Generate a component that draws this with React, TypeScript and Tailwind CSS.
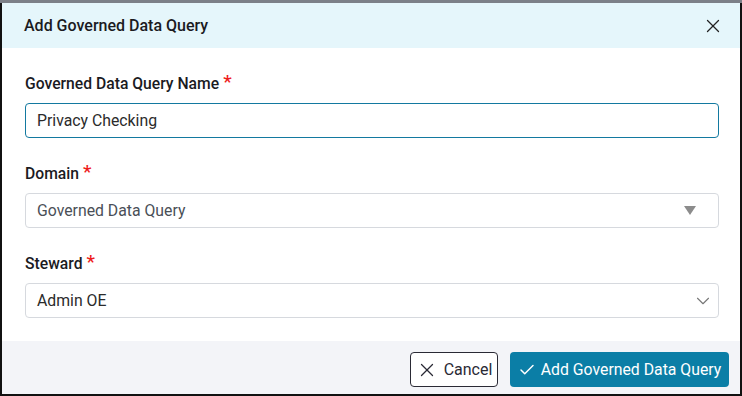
import React from 'react';
import { X, Check, ChevronDown } from 'lucide-react';

function Label({ children }: { children: React.ReactNode }) {
  return (
    <label className="flex items-start h-5 text-[15.7px] font-medium text-[#1b1b1f] leading-5">
      {children}
      <span className="ml-1 text-[#ee1c1c] text-[19px] leading-4">*</span>
    </label>
  );
}

export default function App() {
  return (
    <div className="w-[742px] h-[396px] bg-[#7c8088] pt-[3px] font-['Roboto',sans-serif] overflow-hidden">
      <div className="flex flex-col h-[393px] border-l-2 border-r-2 border-b-2 border-[#111] bg-white">
        <div className="flex items-center justify-between h-[45px] bg-[#e5f6fb] pl-[22px] pr-[16px]">
          <h2 className="text-[16px] font-medium text-[#1b1b1f]">Add Governed Data Query</h2>
          <button className="text-[#222]">
            <X size={22} strokeWidth={1.4} />
          </button>
        </div>

        <div className="flex-1 pt-[26px] pl-[23px] pr-[21px]">
          <Label>Governed Data Query Name</Label>
          <div className="mt-[9px] h-[35px] flex items-center pl-[11px] pr-3 border border-[#1379a0] rounded text-[15.8px] text-[#2b2b2b]">
            Privacy Checking
          </div>

          <div className="mt-[26px]">
            <Label>Domain</Label>
          </div>
          <div className="mt-[9px] h-[35px] flex items-center justify-between pl-[11px] pr-3 border border-[#d6d9de] rounded text-[15.8px] text-[#4a4f57]">
            <span>Governed Data Query</span>
            <svg width="12" height="9" viewBox="0 0 12 9" className="mr-[10px]">
              <path d="M0 0 H12 L6 9 Z" fill="#8c8c8c" />
            </svg>
          </div>

          <div className="mt-[26px]">
            <Label>Steward</Label>
          </div>
          <div className="mt-[9px] h-[35px] flex items-center justify-between pl-[11px] pr-[4px] border border-[#d6d9de] rounded text-[15.8px] text-[#2b2b2b]">
            <span>Admin OE</span>
            <ChevronDown size={22} strokeWidth={1.2} className="text-[#777]" />
          </div>
        </div>

        <div className="h-[53px] bg-[#f3f4f8] flex items-start justify-end gap-3 pt-[11px] pr-[11px]">
          <button className="h-[35px] w-[88px] flex items-center justify-center gap-[6px] border border-[#2a2a35] rounded bg-white text-[16px] text-[#2a2a35]">
            <X size={22} strokeWidth={1.4} />
            Cancel
          </button>
          <button className="h-[35px] w-[219px] flex items-center justify-center gap-[5px] rounded bg-[#0b7ea6] text-[15.8px] text-white">
            <Check size={18} strokeWidth={2} />
            Add Governed Data Query
          </button>
        </div>
      </div>
    </div>
  );
}
